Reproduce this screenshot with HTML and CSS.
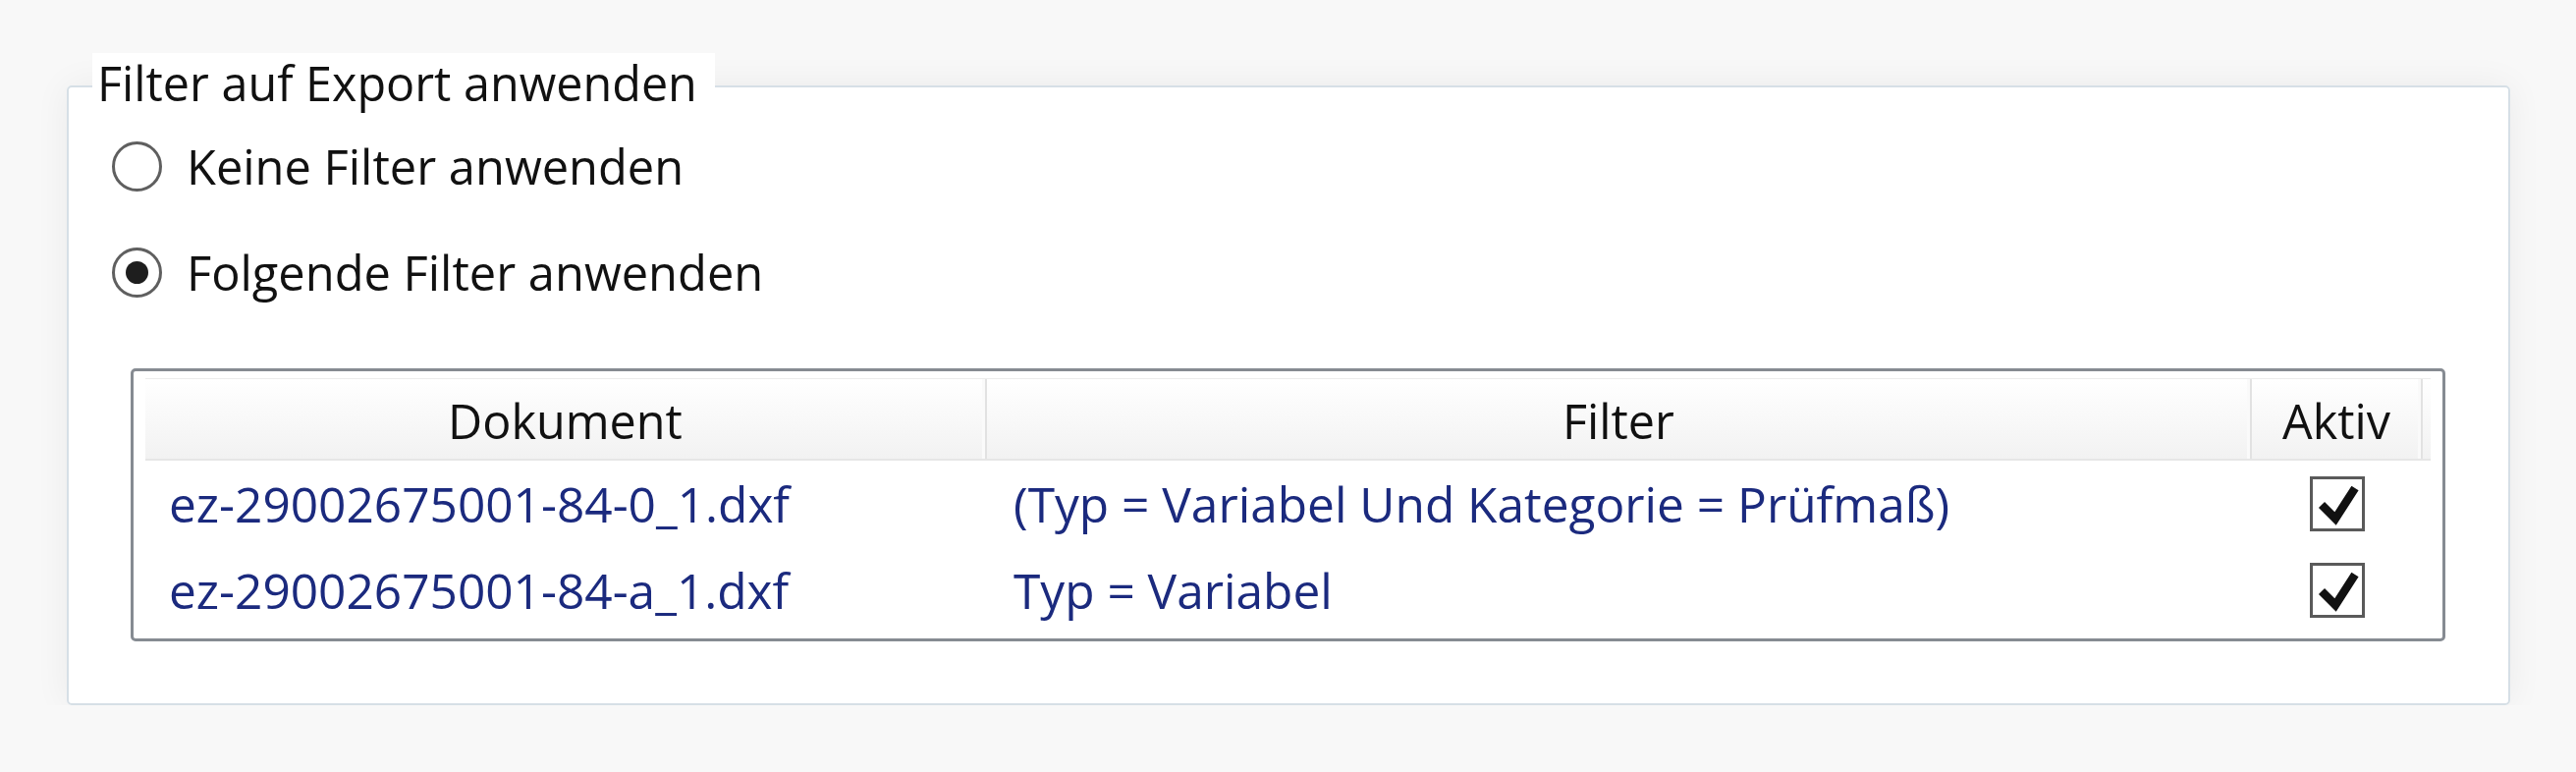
FILE: index.html
```html
<!DOCTYPE html>
<html lang="de">
<head>
  <meta charset="UTF-8">
  <meta name="viewport" content="width=device-width, initial-scale=1.0">
  <title>Filter auf Export anwenden</title>
  <link rel="stylesheet" href="styles.css">
</head>
<body>
  <div class="page">
    <fieldset class="group">
      <legend class="group-title">Filter auf Export anwenden</legend>

      <div class="options">
        <label class="option">
          <span class="radio"></span>
          Keine Filter anwenden
        </label>
        <label class="option">
          <span class="radio checked"></span>
          Folgende Filter anwenden
        </label>
      </div>

      <div class="grid">
        <div class="grid-head">
          <div class="head-cell">Dokument</div>
          <div class="head-cell">Filter</div>
          <div class="head-cell">Aktiv</div>
          <div class="head-fill"></div>
        </div>

        <div class="grid-row">
          <div class="cell doc">ez-29002675001-84-0_1.dxf</div>
          <div class="cell filter">(Typ = Variabel Und Kategorie = Prüfmaß)</div>
          <div class="cell active">
            <span class="check">
              <svg width="50" height="50" viewBox="0 0 50 50"><polyline points="9,26 23,40 43,9" fill="none" stroke="#111" stroke-width="8.5" stroke-linejoin="miter"/></svg>
            </span>
          </div>
        </div>

        <div class="grid-row">
          <div class="cell doc">ez-29002675001-84-a_1.dxf</div>
          <div class="cell filter">Typ = Variabel</div>
          <div class="cell active">
            <span class="check">
              <svg width="50" height="50" viewBox="0 0 50 50"><polyline points="9,26 23,40 43,9" fill="none" stroke="#111" stroke-width="8.5" stroke-linejoin="miter"/></svg>
            </span>
          </div>
        </div>
      </div>
    </fieldset>
  </div>
</body>
</html>
```

FILE: styles.css
```css
body {
  margin: 0;
  background-color: #f8f8f8;
  font-family: 'Open Sans', 'Noto Sans', sans-serif;
  font-size: 48px;
  color: #111;
}

.page {
  padding: 54px 67px 0 68px;
}

.group {
  margin: 0;
  padding: 0 24px 63px 24px;
  border: 2px solid #d6dfe6;
  border-radius: 5px;
  background-color: #fff;
  box-shadow: 0 0 36px rgba(0, 0, 0, 0.06);
  min-width: 0;
}

.group-title {
  padding: 0 18px 8px 5px;
  font-size: 48.5px;
  line-height: 60px;
  background-color: #fff;
}

.options {
  display: flex;
  flex-direction: column;
  gap: 48px;
  padding-top: 17px;
}

.option {
  display: flex;
  align-items: center;
  gap: 25px;
  height: 60px;
  margin-left: 20px;
  font-size: 48.8px;
  line-height: 60px;
}

.radio {
  display: flex;
  align-items: center;
  justify-content: center;
  width: 51px;
  height: 51px;
  box-sizing: border-box;
  border: 3px solid #5f5f5f;
  border-radius: 50%;
  background-color: #fff;
}

.radio.checked::after {
  content: "";
  width: 23px;
  height: 23px;
  border-radius: 50%;
  background-color: #1e1e1e;
}

.grid {
  margin: 68px 40px 0 39px;
  padding: 7px 12px 5px 12px;
  border: 3px solid #868b92;
  border-radius: 5px;
}

.grid-head,
.grid-row {
  display: grid;
  grid-template-columns: 857px 1288px 174px 1fr;
}

.grid-head {
  border-top: 1px solid #ececec;
  border-bottom: 2px solid #e6e6e6;
  background: linear-gradient(#ffffff, #f2f2f2);
}

.head-cell {
  padding-top: 3px;
  font-size: 48.5px;
  line-height: 78px;
  text-align: center;
  border-right: 2px solid #e2e2e2;
  box-shadow: inset -3px 0 0 #fafafa;
}

.cell {
  font-size: 49.6px;
  line-height: 88px;
  color: #1b2a7e;
  white-space: nowrap;
}

.doc {
  padding-left: 24px;
}

.filter {
  padding-left: 27px;
}

.active {
  display: flex;
  align-items: center;
  justify-content: center;
}

.check {
  display: flex;
  align-items: center;
  justify-content: center;
  width: 56px;
  height: 56px;
  box-sizing: border-box;
  border: 3px solid #5a5a5a;
  background-color: #fff;
}
```
